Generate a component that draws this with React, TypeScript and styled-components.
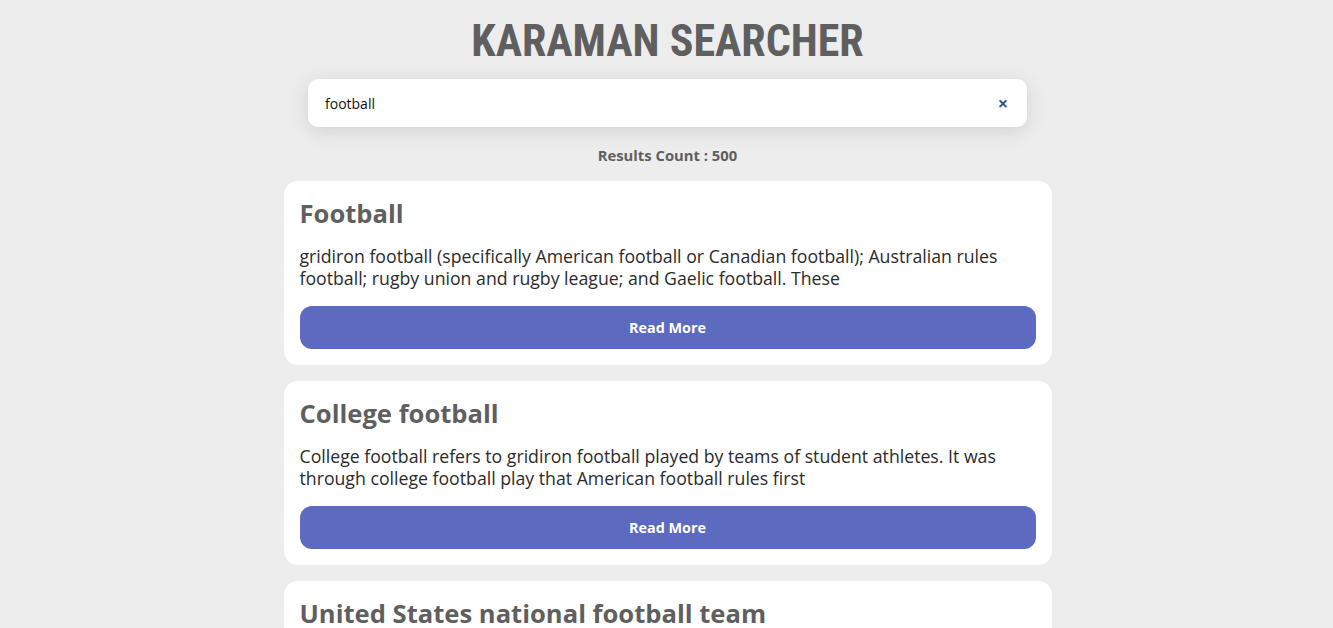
import React, { useState } from 'react';
import styled, { createGlobalStyle } from 'styled-components';

const GlobalStyle = createGlobalStyle`
  body {
    margin: 0;
    background: #ededed;
    font-family: "Open Sans", "Noto Sans", sans-serif;
  }
`;

const Page = styled.div`
  display: flex;
  flex-direction: column;
  align-items: center;
  padding: 16px 0 0 2px;
`;

const Title = styled.h1`
  margin: 0;
  font-family: "Liberation Sans Narrow", "Roboto Condensed", "Open Sans", sans-serif;
  font-size: 44px;
  line-height: 50px;
  font-weight: 700;
  color: #5f5f5f;
`;

const SearchBox = styled.div`
  margin-top: 13px;
  width: 719px;
  height: 48px;
  box-sizing: border-box;
  background: #fff;
  border-radius: 10px;
  box-shadow: 0 4px 20px rgba(0, 0, 0, 0.12);
  display: flex;
  align-items: center;
  padding: 0 19px 0 15px;
`;

const SearchInput = styled.input`
  flex: 1;
  border: none;
  outline: none;
  background: transparent;
  font-family: "Open Sans", sans-serif;
  font-size: 14px;
  color: #111;
`;

const ClearButton = styled.button`
  border: none;
  background: none;
  padding: 0;
  font-size: 18px;
  font-weight: 700;
  color: #34548a;
  cursor: pointer;
  font-family: "Open Sans", sans-serif;
`;

const Count = styled.div`
  margin-top: 18px;
  font-size: 14.8px;
  font-weight: 700;
  color: #5f5f5f;
`;

const List = styled.div`
  margin-top: 16px;
  width: 768px;
  display: flex;
  flex-direction: column;
  gap: 16px;
`;

const Card = styled.div`
  background: #fff;
  border-radius: 14px;
  padding: 16px;
  display: flex;
  flex-direction: column;
`;

const CardTitle = styled.h2`
  margin: 0;
  font-size: 25.6px;
  line-height: 34px;
  font-weight: 700;
  color: #5f5f5f;
`;

const Snippet = styled.p`
  margin: 14px 0 0;
  font-size: 17.7px;
  line-height: 22px;
  color: #2b2b2b;
`;

const ReadMore = styled.button`
  margin-top: 17px;
  height: 43px;
  border: none;
  border-radius: 12px;
  background: #5c6bc0;
  color: #fff;
  font-family: "Open Sans", sans-serif;
  font-size: 14.4px;
  font-weight: 700;
  cursor: pointer;
`;

const results = [
  {
    title: 'Football',
    text: 'gridiron football (specifically American football or Canadian football); Australian rules football; rugby union and rugby league; and Gaelic football. These',
  },
  {
    title: 'College football',
    text: 'College football refers to gridiron football played by teams of student athletes. It was through college football play that American football rules first',
  },
  {
    title: 'United States national football team',
    text: 'The United States national football team represents the United States in international football competitions and is controlled by U.S. Soccer',
  },
];

export default function App() {
  const [query, setQuery] = useState('football');

  return (
    <Page>
      <GlobalStyle />
      <Title>KARAMAN SEARCHER</Title>
      <SearchBox>
        <SearchInput value={query} onChange={(e) => setQuery(e.target.value)} />
        <ClearButton onClick={() => setQuery('')}>×</ClearButton>
      </SearchBox>
      <Count>Results Count : 500</Count>
      <List>
        {results.map((r) => (
          <Card key={r.title}>
            <CardTitle>{r.title}</CardTitle>
            <Snippet>{r.text}</Snippet>
            <ReadMore>Read More</ReadMore>
          </Card>
        ))}
      </List>
    </Page>
  );
}
